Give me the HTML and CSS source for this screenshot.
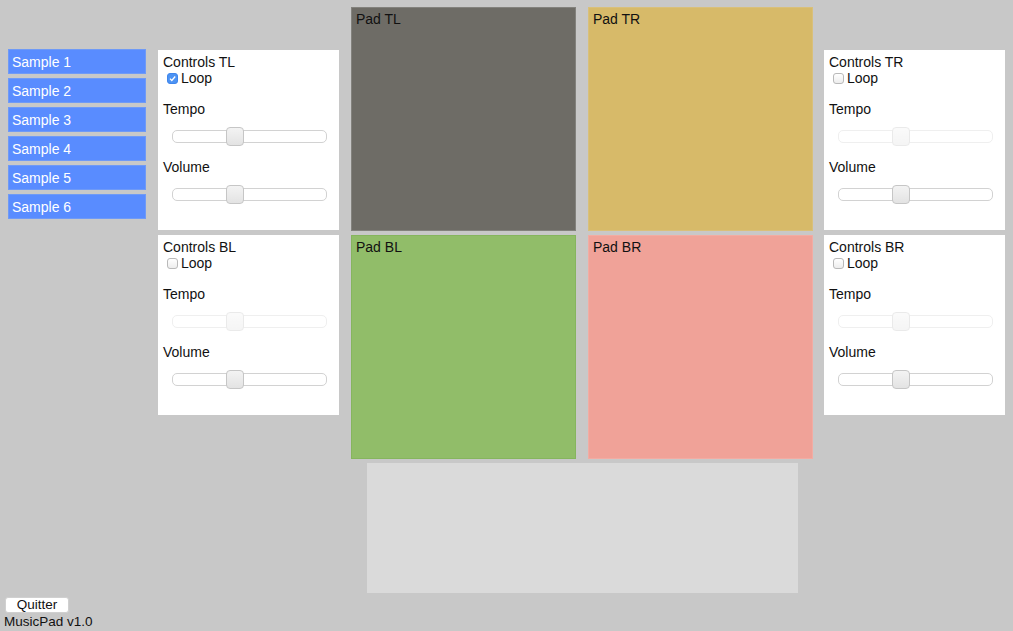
FILE: index.html
```html
<!DOCTYPE html>
<html lang="fr">
<head>
    <meta charset="UTF-8">
    <meta name="viewport" content="width=device-width, initial-scale=1.0">
    <title>MusicPad</title>
    <link rel="stylesheet" href="styles.css">
</head>
<body>
    <div class="app">
        <div class="main">
            <div class="samples">
                <button class="sample">Sample 1</button>
                <button class="sample">Sample 2</button>
                <button class="sample">Sample 3</button>
                <button class="sample">Sample 4</button>
                <button class="sample">Sample 5</button>
                <button class="sample">Sample 6</button>
            </div>

            <div class="controls-col">
                <div class="controls">
                    <div class="ctl-title">Controls TL</div>
                    <label class="loop"><input type="checkbox" checked>Loop</label>
                    <div class="ctl-label">Tempo</div>
                    <input class="slider" type="range" min="0" max="100" value="39">
                    <div class="ctl-label">Volume</div>
                    <input class="slider" type="range" min="0" max="100" value="39">
                </div>
                <div class="controls">
                    <div class="ctl-title">Controls BL</div>
                    <label class="loop"><input type="checkbox">Loop</label>
                    <div class="ctl-label">Tempo</div>
                    <input class="slider" type="range" min="0" max="100" value="39" disabled>
                    <div class="ctl-label">Volume</div>
                    <input class="slider" type="range" min="0" max="100" value="39">
                </div>
            </div>

            <div class="center">
                <div class="pads">
                    <div class="pad pad-tl">Pad TL</div>
                    <div class="pad pad-tr">Pad TR</div>
                    <div class="pad pad-bl">Pad BL</div>
                    <div class="pad pad-br">Pad BR</div>
                </div>
                <div class="wave"></div>
            </div>

            <div class="controls-col">
                <div class="controls">
                    <div class="ctl-title">Controls TR</div>
                    <label class="loop"><input type="checkbox">Loop</label>
                    <div class="ctl-label">Tempo</div>
                    <input class="slider" type="range" min="0" max="100" value="39" disabled>
                    <div class="ctl-label">Volume</div>
                    <input class="slider" type="range" min="0" max="100" value="39">
                </div>
                <div class="controls">
                    <div class="ctl-title">Controls BR</div>
                    <label class="loop"><input type="checkbox">Loop</label>
                    <div class="ctl-label">Tempo</div>
                    <input class="slider" type="range" min="0" max="100" value="39" disabled>
                    <div class="ctl-label">Volume</div>
                    <input class="slider" type="range" min="0" max="100" value="39">
                </div>
            </div>
        </div>

        <div class="footer">
            <button class="quit">Quitter</button>
            <div class="version">MusicPad v1.0</div>
        </div>
    </div>
</body>
</html>
```

FILE: styles.css
```css
body {
    font-family: "Liberation Sans", Arial, sans-serif;
    margin: 0;
    padding: 0;
    background-color: #c8c8c8;
    color: #111;
}

.app {
    width: 1013px;
    height: 631px;
    display: flex;
    flex-direction: column;
}

.main {
    height: 597px;
    display: flex;
    padding-left: 8px;
    gap: 12px;
}

/* sample list */
.samples {
    width: 138px;
    padding-top: 49px;
    display: flex;
    flex-direction: column;
    gap: 4px;
}

.sample {
    height: 25px;
    margin: 0;
    padding: 0 3px;
    border: 1px solid #6f9af6;
    background-color: #598cff;
    color: #fff;
    font-family: inherit;
    font-size: 14px;
    text-align: left;
}

/* control panels */
.controls-col {
    width: 181px;
    padding-top: 50px;
    display: flex;
    flex-direction: column;
    gap: 5px;
}

.controls {
    height: 180px;
    box-sizing: border-box;
    background-color: #fff;
    padding: 4px 5px 5px 5px;
    font-size: 14px;
    line-height: 16px;
}

.loop {
    display: flex;
    align-items: center;
    height: 16px;
}

.loop input {
    -webkit-appearance: none;
    appearance: none;
    width: 11px;
    height: 11px;
    margin: 0 3px 0 4px;
    border: 1px solid #b9b9b9;
    border-radius: 3px;
    background: linear-gradient(#fff, #ededed);
}

.loop input:checked {
    border-color: #3f86ec;
    background: #4d93f3 url("data:image/svg+xml,%3Csvg xmlns='http://www.w3.org/2000/svg' viewBox='0 0 9 9'%3E%3Cpath d='M2 4.6l1.8 1.9 3.4-4' fill='none' stroke='white' stroke-width='1.3'/%3E%3C/svg%3E") center / 9px 9px no-repeat;
}

.ctl-label {
    margin-top: 15px;
}

.slider + .ctl-label {
    margin-top: 13px;
}

.slider {
    -webkit-appearance: none;
    appearance: none;
    display: block;
    width: 155px;
    height: 19px;
    margin: 10px 0 0 9px;
    background: transparent;
}

.slider::-webkit-slider-runnable-track {
    height: 13px;
    box-sizing: border-box;
    border: 1px solid #d2d2d2;
    border-radius: 5px;
    background: #fff;
}

.slider::-webkit-slider-thumb {
    -webkit-appearance: none;
    width: 18px;
    height: 19px;
    margin-top: -4px;
    box-sizing: border-box;
    border: 1px solid #c6c6c6;
    border-radius: 4px;
    background: linear-gradient(#f3f3f3, #e3e3e3);
}

.slider:disabled {
    opacity: 0.35;
}

/* pads */
.center {
    width: 462px;
    padding-top: 7px;
}

.center + .controls-col {
    margin-left: -1px;
}

.pads {
    display: grid;
    grid-template-columns: 225px 225px;
    grid-template-rows: 224px 224px;
    gap: 4px 12px;
}

.pad {
    box-sizing: border-box;
    padding: 3px 4px;
    font-size: 14px;
    line-height: 16px;
    border: 1px solid;
}

.pad-tl {
    background-color: #6e6c66;
    border-color: #83827d;
}

.pad-tr {
    background-color: #d7ba69;
    border-color: #d9c07a;
}

.pad-bl {
    background-color: #91bd69;
    border-color: #86b55e;
}

.pad-br {
    background-color: #f0a298;
    border-color: #f2aca3;
}

.wave {
    width: 431px;
    height: 130px;
    margin: 4px auto 0;
    background-color: #dadada;
}

/* footer */
.footer {
    font-size: 13.5px;
}

.quit {
    display: block;
    width: 64px;
    height: 16px;
    margin: 0 0 0 5px;
    padding: 0;
    border: 1px solid #d0d0d0;
    border-radius: 3px;
    background-color: #fff;
    color: #111;
    font-family: inherit;
    font-size: 13.5px;
    line-height: 14px;
}

.version {
    padding-left: 4px;
    line-height: 17px;
}
```
